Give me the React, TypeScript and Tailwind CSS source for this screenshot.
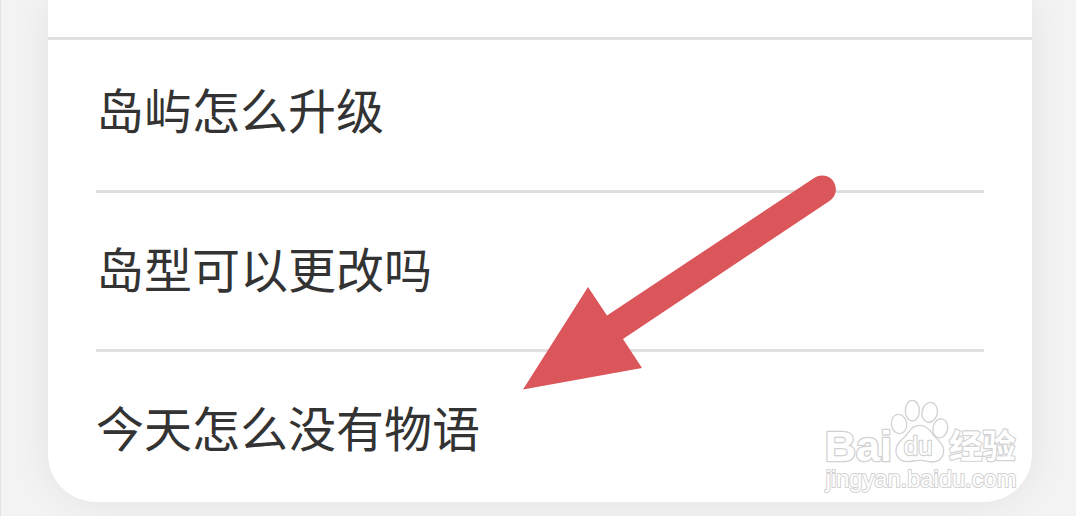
const questions = [
  { id: "upgrade", title: "岛屿怎么升级" },
  { id: "shape", title: "岛型可以更改吗" },
  { id: "story", title: "今天怎么没有物语" },
];

function Watermark() {
  return (
    <svg
      className="pointer-events-none absolute right-2 bottom-[7px] h-[100px] w-[204px]"
      viewBox="30 15 612 300"
      fill="#ffffff"
      stroke="#d2d2d2"
      strokeWidth="4"
      strokeLinejoin="round"
      role="img"
      aria-label="Baidu 经验"
    >
      <text x="44" y="212" fontSize="130" className="font-['Liberation_Sans',sans-serif] font-bold" strokeWidth="8" paintOrder="stroke">
        Bai
      </text>
      <ellipse cx="267" cy="102" rx="23" ry="29" transform="rotate(-8 267 102)" />
      <ellipse cx="307" cy="62" rx="21" ry="31" />
      <ellipse cx="359" cy="67" rx="23" ry="30" transform="rotate(12 359 67)" />
      <ellipse cx="391" cy="115" rx="22" ry="29" transform="rotate(12 391 115)" />
      <path d="M329 106C311 106 301 116 293 130C283 147 258 155 258 181C258 202 272 215 291 215C306 215 315 211 330 211C345 211 352 216 367 216C388 216 401 202 401 181C401 158 379 149 367 131C358 117 348 106 329 106Z" />
      <text x="281" y="194" fontSize="78" className="font-['Liberation_Sans',sans-serif]" strokeWidth="7" paintOrder="stroke">
        du
      </text>
      <text x="417" y="203" fontSize="100" className="font-['Noto_Sans_CJK_SC',sans-serif] font-bold" strokeWidth="7" paintOrder="stroke">
        经验
      </text>
      <text x="47" y="290" fontSize="71" className="font-['Liberation_Sans',sans-serif]" strokeWidth="6" paintOrder="stroke">
        jingyan.baidu.com
      </text>
    </svg>
  );
}

function Arrow() {
  return (
    <svg
      className="pointer-events-none absolute top-[174px] left-[474px] h-[218px] w-[316px]"
      viewBox="522 174 316 218"
      fill="#da565b"
      aria-hidden="true"
    >
      <path d="M523 389.500L588 287L607 315.500L814.500 177.700A13.800 13.800 0 1 1 829.500 201L623 339L642 368Z" />
    </svg>
  );
}

export default function App() {
  return (
    <main className="border-l border-[#e2e2e2] bg-[#f3f3f3] pr-11 pb-[14px] pl-[47px] font-['Noto_Sans_CJK_SC',sans-serif] text-[#333333]">
      <section className="relative rounded-b-[48px] bg-white shadow-[0_0_40px_rgba(0,0,0,0.07)]">
        <div className="h-10 border-b-[3px] border-[#dfdfdf]" />
        <ul className="px-12 pt-11 pb-[52px]">
          {questions.map((question) => (
            <li
              key={question.id}
              className="mb-[50px] border-b-[3px] border-[#dfdfdf] pb-[58px] last:mb-0 last:border-b-0 last:pb-0"
            >
              <a href={`#${question.id}`} className="block text-5xl leading-[48px]">
                {question.title}
              </a>
            </li>
          ))}
        </ul>
        <Arrow />
        <Watermark />
      </section>
    </main>
  );
}
